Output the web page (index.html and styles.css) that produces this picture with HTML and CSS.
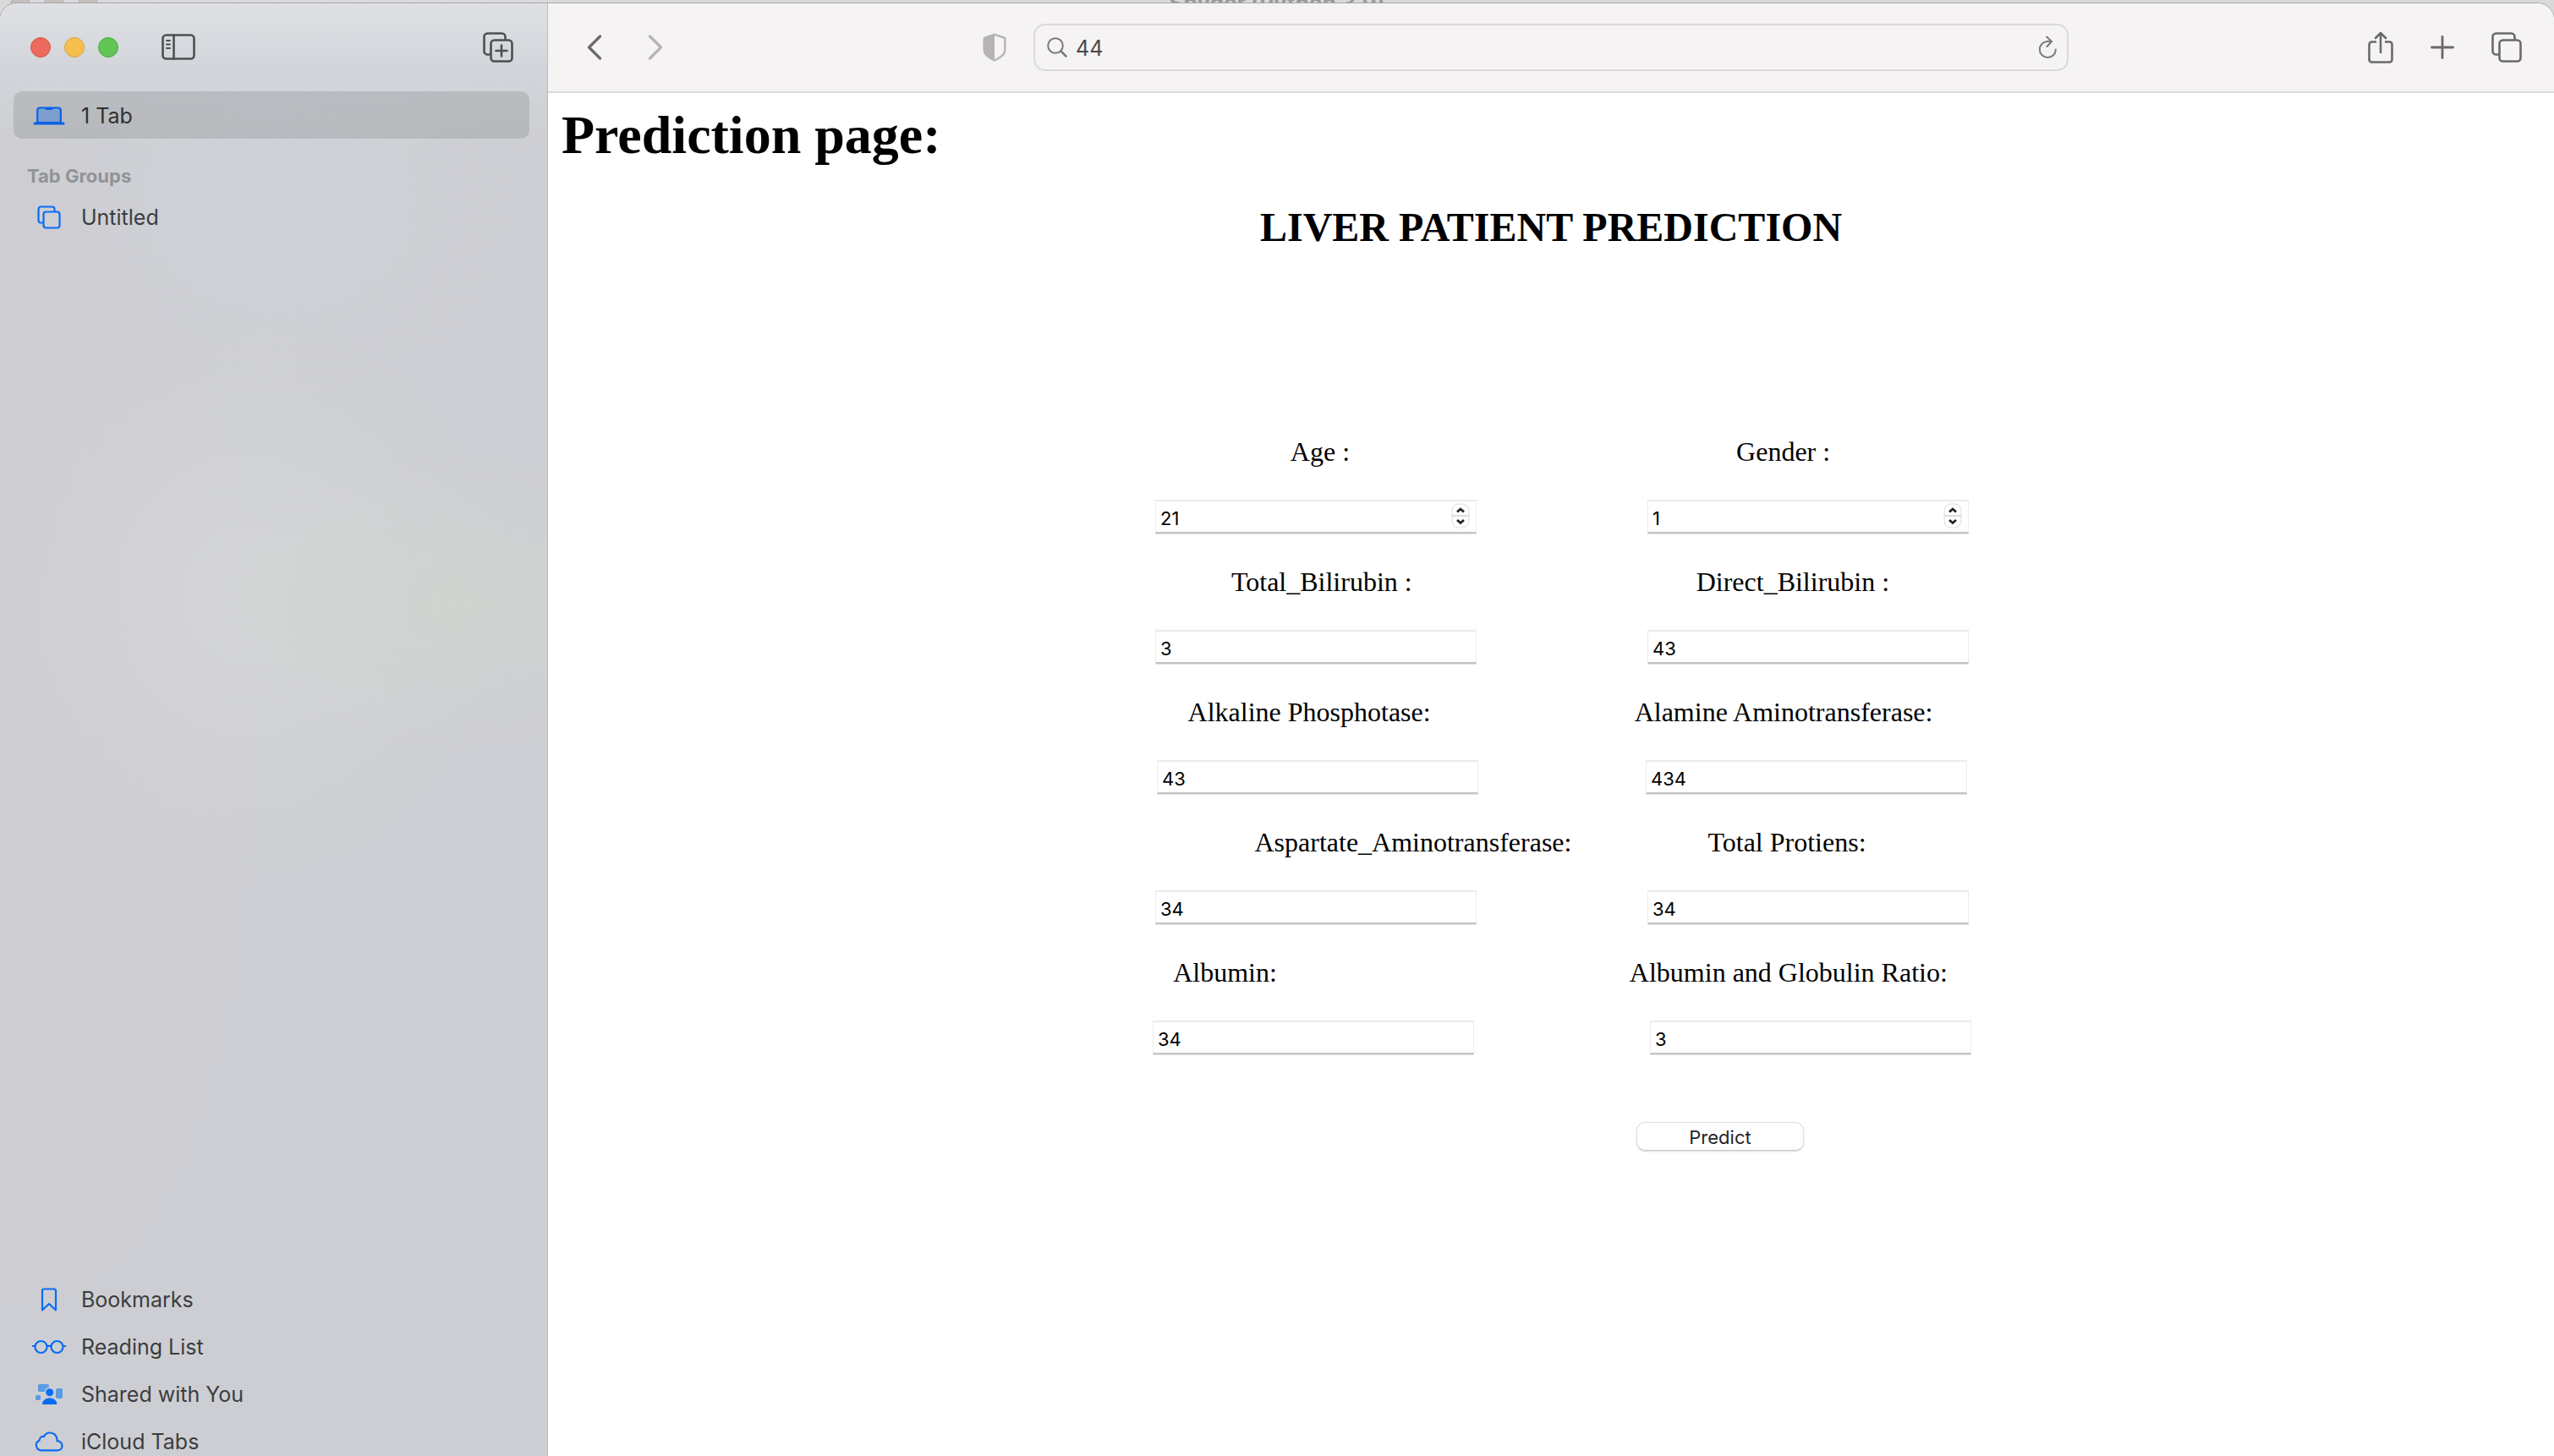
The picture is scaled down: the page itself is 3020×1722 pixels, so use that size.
FILE: index.html
```html
<!DOCTYPE html>
<html lang="en">
<head>
<meta charset="utf-8">
<title>Prediction page</title>
<link rel="stylesheet" href="styles.css">
</head>
<body>
<div class="desktop">
  <div class="behind">
    <div class="behind-lights"><i></i><i></i><i></i></div>
    <span class="behind-title">Spyder (Python 3.9)</span>
  </div>
  <div class="window">
    <aside class="sidebar">
      <div class="sidebar-bar">
        <div class="lights">
          <button class="light red" aria-label="Close"></button>
          <button class="light amber" aria-label="Minimize"></button>
          <button class="light green" aria-label="Zoom"></button>
        </div>
        <button class="icon-btn dark side-toggle" aria-label="Toggle sidebar">
          <svg width="40" height="32" viewBox="0 0 40 32" fill="none" stroke="currentColor" stroke-width="2.6" stroke-linecap="round"><rect x="1.5" y="1.5" width="37" height="28" rx="4"/><path d="M14.5 1.5v28"/><path d="M6 8h4M6 12.500h4M6 17h4" stroke-width="2"/></svg>
        </button>
        <button class="icon-btn dark" aria-label="New tab group">
          <svg width="36" height="36" viewBox="0 0 36 36" fill="none" stroke="currentColor" stroke-width="2.6" stroke-linecap="round" stroke-linejoin="round"><path d="M8 26.500H5.500a4 4 0 0 1-4-4V5.500a4 4 0 0 1 4-4h17a4 4 0 0 1 4 4V8"/><rect x="9.500" y="9.500" width="25" height="25" rx="4"/><path d="M22 15.500v13M15.500 22h13"/></svg>
        </button>
      </div>
      <nav class="nav">
        <a class="item current" href="#">
          <span class="item-icon"><svg width="38" height="22" viewBox="0 0 38 22"><path d="M5.200 19V4.500a3 3 0 0 1 3-3h21.600a3 3 0 0 1 3 3V19z" fill="#7c9fce" stroke="#0a60e8" stroke-width="2.200"/><path d="M14.500 1h9v1.500a1.500 1.500 0 0 1-1.500 1.500h-6a1.500 1.500 0 0 1-1.500-1.500z" fill="#0a60e8"/><rect x=".500" y="18.500" width="37" height="3" rx="1.500" fill="#0a60e8"/></svg></span>
          <span>1 Tab</span>
        </a>
        <h3 class="group-title">Tab Groups</h3>
        <a class="item" href="#">
          <span class="item-icon"><svg width="28" height="28" viewBox="0 0 28 28" fill="none" stroke="#0a6cf5" stroke-width="2.200"><path d="M7 20.500H4.500a3 3 0 0 1-3-3v-13a3 3 0 0 1 3-3h13a3 3 0 0 1 3 3V7"/><rect x="7.500" y="7.500" width="19" height="19" rx="3"/></svg></span>
          <span>Untitled</span>
        </a>
      </nav>
      <nav class="nav library">
        <a class="item" href="#">
          <span class="item-icon"><svg width="20" height="28" viewBox="0 0 20 28" fill="none" stroke="#0a6cf5" stroke-width="2.200" stroke-linejoin="round"><path d="M2 26.500V3.500a2 2 0 0 1 2-2h12a2 2 0 0 1 2 2v23L10 19z"/></svg></span>
          <span>Bookmarks</span>
        </a>
        <a class="item" href="#">
          <span class="item-icon"><svg width="40" height="18" viewBox="0 0 40 18" fill="none" stroke="#0a6cf5" stroke-width="2.200"><circle cx="10.500" cy="9" r="7"/><circle cx="29.500" cy="9" r="7"/><path d="M17.500 7.800h5M0 8h3.500M36.500 8H40"/></svg></span>
          <span>Reading List</span>
        </a>
        <a class="item" href="#">
          <span class="item-icon"><svg width="34" height="26" viewBox="0 0 34 26"><g fill="#5b9ae6"><path d="M6 1h9a2 2 0 0 1 2 2v1.500a6 6 0 0 0-5 5.500H5.500A1.500 1.500 0 0 1 4 8.500V3a2 2 0 0 1 2-2z"/><rect x="25" y="6" width="8" height="12" rx="2"/><rect x="1" y="14" width="6" height="6" rx="1.500"/></g><circle cx="17.700" cy="10.700" r="4.500" fill="#0a6cf5"/><path d="M9 25c0-5 4-7.500 8.700-7.500s8.700 2.500 8.700 7.500z" fill="#0a6cf5"/></svg></span>
          <span>Shared with You</span>
        </a>
        <a class="item" href="#">
          <span class="item-icon"><svg width="34" height="24" viewBox="0 0 34 24" fill="none" stroke="#0a6cf5" stroke-width="2.200" stroke-linejoin="round"><path d="M8 22.300a6 6 0 0 1-2.500-11.500C5.500 7.500 8 5.500 11 6c1.500-3 4-4.500 7-4.500 5 0 8.500 3.500 8.500 8.500v1.200c3.500.6 6 2.500 6 5.500 0 3.500-2.500 5.600-6 5.600z"/></svg></span>
          <span>iCloud Tabs</span>
        </a>
      </nav>
    </aside>
    <section class="browser">
      <header class="toolbar">
        <div class="side history">
          <button class="icon-btn" aria-label="Back"><svg width="18" height="30" viewBox="0 0 18 30" fill="none" stroke="currentColor" stroke-width="3.200" stroke-linecap="round" stroke-linejoin="round"><path d="M15.500 2 2.500 15l13 13"/></svg></button>
          <button class="icon-btn faded" aria-label="Forward"><svg width="18" height="30" viewBox="0 0 18 30" fill="none" stroke="currentColor" stroke-width="3.200" stroke-linecap="round" stroke-linejoin="round"><path d="m2.500 2 13 13-13 13"/></svg></button>
          <button class="icon-btn faded shield" aria-label="Privacy report"><svg width="28" height="34" viewBox="0 0 28 34"><path d="M14 1.800 25 5.500a1.500 1.500 0 0 1 1.300 1.500v14c0 5-6 8.500-12.300 11.500C7.700 29.500 1.700 26 1.700 21V7A1.500 1.500 0 0 1 3 5.500z" fill="none" stroke="currentColor" stroke-width="2.400"/><path d="M14 1.800 3 5.500A1.500 1.500 0 0 0 1.700 7v14c0 5 6 8.500 12.300 11.500z" fill="currentColor"/></svg></button>
        </div>
        <div class="address">
          <svg width="24" height="24" viewBox="0 0 24 24" fill="none" stroke="currentColor" stroke-width="2" stroke-linecap="round"><circle cx="10" cy="10" r="8.800"/><path d="m16.500 16.500 6 6" stroke-width="2.600"/></svg>
          <input class="address-input" type="text" value="44" aria-label="Address">
          <button class="icon-btn soft" aria-label="Reload"><svg width="22" height="28" viewBox="0 0 22 28" fill="none" stroke="currentColor" stroke-width="2" stroke-linecap="round" stroke-linejoin="round"><path d="M15.500 7H11a9.500 9.500 0 1 0 9.800 9.500"/><path d="m10 1.500 6 5.500-5.500 6"/></svg></button>
        </div>
        <div class="side actions">
          <button class="icon-btn" aria-label="Share"><svg width="30" height="38" viewBox="0 0 30 38" fill="none" stroke="currentColor" stroke-width="2.600" stroke-linecap="round" stroke-linejoin="round"><path d="M9 12.500H4.500a3 3 0 0 0-3 3v18a3 3 0 0 0 3 3h21a3 3 0 0 0 3-3v-18a3 3 0 0 0-3-3H21"/><path d="M15 25V2M9 8l6-6 6 6"/></svg></button>
          <button class="icon-btn" aria-label="New tab"><svg width="28" height="28" viewBox="0 0 28 28" fill="none" stroke="currentColor" stroke-width="2.800" stroke-linecap="round"><path d="M14 1.500v25M1.500 14h25"/></svg></button>
          <button class="icon-btn" aria-label="Tab overview"><svg width="36" height="36" viewBox="0 0 36 36" fill="none" stroke="currentColor" stroke-width="2.600" stroke-linecap="round" stroke-linejoin="round"><path d="M8 26.500H5.500a4 4 0 0 1-4-4V5.500a4 4 0 0 1 4-4h18a4 4 0 0 1 4 4V8"/><rect x="9.500" y="9.500" width="25" height="25" rx="4"/></svg></button>
        </div>
      </header>
      <main class="page">
        <h1>Prediction page:</h1>
        <h2>LIVER PATIENT PREDICTION</h2>
        <form class="form">
          <div class="labels l1"><label for="age">Age :</label><label for="gender">Gender :</label></div>
          <div class="fields">
            <div class="number"><input class="field" id="age" type="number" value="21"><svg class="stepper" width="22" height="30" viewBox="0 0 22 30"><rect x="1" y="1" width="20" height="28" rx="8" fill="#fff" stroke="#dcdcdc"/><path d="M1 14h20v2H1z" fill="#dcdcdc"/><path d="m7 10.500 4-3.500 4 3.500M7 20l4 3.500 4-3.500" fill="none" stroke="#222" stroke-width="2.800"/></svg></div>
            <div class="number"><input class="field" id="gender" type="number" value="1"><svg class="stepper" width="22" height="30" viewBox="0 0 22 30"><rect x="1" y="1" width="20" height="28" rx="8" fill="#fff" stroke="#dcdcdc"/><path d="M1 14h20v2H1z" fill="#dcdcdc"/><path d="m7 10.500 4-3.500 4 3.500M7 20l4 3.500 4-3.500" fill="none" stroke="#222" stroke-width="2.800"/></svg></div>
          </div>
          <div class="labels l2"><label for="tb">Total_Bilirubin :</label><label for="db">Direct_Bilirubin :</label></div>
          <div class="fields"><input class="field" id="tb" type="text" value="3"><input class="field" id="db" type="text" value="43"></div>
          <div class="labels l3"><label for="alp">Alkaline Phosphotase:</label><label for="alt">Alamine Aminotransferase:</label></div>
          <div class="fields narrow"><input class="field" id="alp" type="text" value="43"><input class="field" id="alt" type="text" value="434"></div>
          <div class="labels l4"><label for="ast">Aspartate_Aminotransferase:</label><label for="tp">Total Protiens:</label></div>
          <div class="fields"><input class="field" id="ast" type="text" value="34"><input class="field" id="tp" type="text" value="34"></div>
          <div class="labels l5"><label for="alb">Albumin:</label><label for="agr">Albumin and Globulin Ratio:</label></div>
          <div class="fields wide"><input class="field" id="alb" type="text" value="34"><input class="field" id="agr" type="text" value="3"></div>
          <div class="submit"><button class="predict" type="button">Predict</button></div>
        </form>
      </main>
    </section>
  </div>
</div>
</body>
</html>
```
FILE: styles.css
```css
* { box-sizing: border-box; }
body { margin: 0; font-family: Inter, sans-serif; }
button { border: 0; padding: 0; background: none; font: inherit; }
svg { display: block; flex: none; }

.desktop { display: flex; flex-direction: column; height: 100vh; overflow: hidden; background: #d9d9d9; }

/* Sliver of the window that sits behind the browser */
.behind { display: flex; align-items: flex-start; height: 4px; position: relative; justify-content: center; }
.behind-lights { position: absolute; left: 12px; top: -6px; display: flex; gap: 16px; }
.behind-lights i { width: 24px; height: 24px; border-radius: 50%; background: #c4c0c0; border: 1px solid #b0acac; }
.behind-title { font-size: 26px; line-height: 26px; font-weight: 700; color: #999; margin-top: -9px; }

.window { display: flex; flex: 1; min-height: 0; position: relative; border-radius: 20px 20px 0 0; overflow: hidden; background: #fff; box-shadow: 0 0 0 1px #a8a8a8; }

.sidebar {
  width: 648px; flex: none; display: flex; flex-direction: column; overflow: hidden;
  border-right: 1px solid #bcbcbe;
  background:
    linear-gradient(to bottom, rgba(224,226,230,.9), rgba(214,219,225,.5) 80px, transparent 170px),
    radial-gradient(300px 170px at 540px 710px, rgba(207,213,206,.8), transparent),
    radial-gradient(300px 330px at 290px 700px, rgba(213,214,216,.9), transparent),
    radial-gradient(280px 240px at 330px 230px, rgba(207,211,217,.8), transparent),
    radial-gradient(260px 700px at 40px 850px, rgba(208,205,210,.7), transparent),
    #cdced3;
}
.sidebar-bar { display: flex; align-items: center; height: 104px; padding: 0 40px 0 36px; }
.lights { display: flex; gap: 16px; }
.light { width: 24px; height: 24px; border-radius: 50%; border: 1px solid; }
.red { background: #ec6a5e; border-color: #d55549; }
.amber { background: #f4bf4f; border-color: #dba53a; }
.green { background: #61c454; border-color: #4ead40; }
.side-toggle { margin: 0 auto 0 51px; }

.icon-btn { color: #6b6969; }
.dark { color: #4d4f52; }
.soft { color: #7c7a7b; }
.faded { color: #b5b3b4; }

.nav { display: flex; flex-direction: column; padding: 0 21px 0 16px; }
.item { display: flex; align-items: center; gap: 18px; height: 56px; padding: 2px 0 0 22px; border-radius: 10px; color: #3c3d3f; font-size: 25px; line-height: 32px; text-decoration: none; }
.item-icon { width: 40px; display: flex; justify-content: center; }
.current { background: rgba(0,0,0,.11); color: #303133; }
.group-title { margin: 28px 0 4px 16px; font-size: 22px; line-height: 32px; font-weight: 700; color: #919396; }
.library { margin-top: auto; margin-bottom: -10px; }

.browser { flex: 1; min-width: 0; display: flex; flex-direction: column; }
.toolbar { display: grid; grid-template-columns: 1fr 1224px 1fr; align-items: center; height: 106px; background: #f5f3f4; border-bottom: 2px solid #dcdbdc; }
.side { display: flex; align-items: center; }
.history { padding: 0 32px 0 46px; gap: 54px; }
.shield { margin-left: auto; }
.actions { justify-content: flex-end; padding-right: 38px; gap: 44px; }
.address { height: 56px; display: flex; align-items: center; gap: 10px; padding: 0 12px 0 14px; border: 2px solid #dad8d9; border-radius: 14px; color: #7c7a7b; }
.address-input { flex: 1; min-width: 0; border: 0; padding: 2px 0 0; background: none; font: 25px/32px Inter, sans-serif; color: #4a4849; }

.page { flex: 1; padding: 14px 16px; color: #000; font-family: "Liberation Serif", "Times New Roman", serif; }
h1 { margin: 0; font-size: 64px; line-height: 72px; }
h2 { margin: 46px 0 0; font-size: 48px; line-height: 54px; text-align: center; }
.form { display: flex; flex-direction: column; gap: 38px; margin-top: 219px; padding-left: 22px; }
.labels, .fields { display: flex; justify-content: center; }
.labels { font-size: 32px; line-height: 38px; white-space: nowrap; }
.l1 { gap: 457px; }
.l2 { gap: 336px; }
.l3 { gap: 241px; }
.l4 { gap: 161px; }
.l5 { gap: 417px; }
.fields { gap: 202px; padding-left: 4px; }
.narrow { gap: 198px; }
.wide { gap: 208px; }
.field { width: 380px; height: 40px; margin: 0; padding: 3px 5px 0; border: 1px solid #ececec; border-top: 2px solid #ebebeb; border-bottom: 2px solid #c4c4c4; box-shadow: 0 1px 0 #e4e4e4; background: #fff; color: #000; font: 22px/28px Inter, sans-serif; appearance: textfield; }
.field::-webkit-inner-spin-button { appearance: none; }
.number { position: relative; display: flex; }
.stepper { position: absolute; right: 8px; top: 4px; }
.submit { display: flex; justify-content: center; padding: 42px 0 0 378px; }
.predict { width: 198px; height: 34px; padding-top: 2px; border: 1px solid #dedede; border-bottom-color: #c6c6c6; border-radius: 10px; background: #fff; box-shadow: 0 1px 2px rgba(0,0,0,.15); color: #262626; font: 22px/30px Inter, sans-serif; }
```
